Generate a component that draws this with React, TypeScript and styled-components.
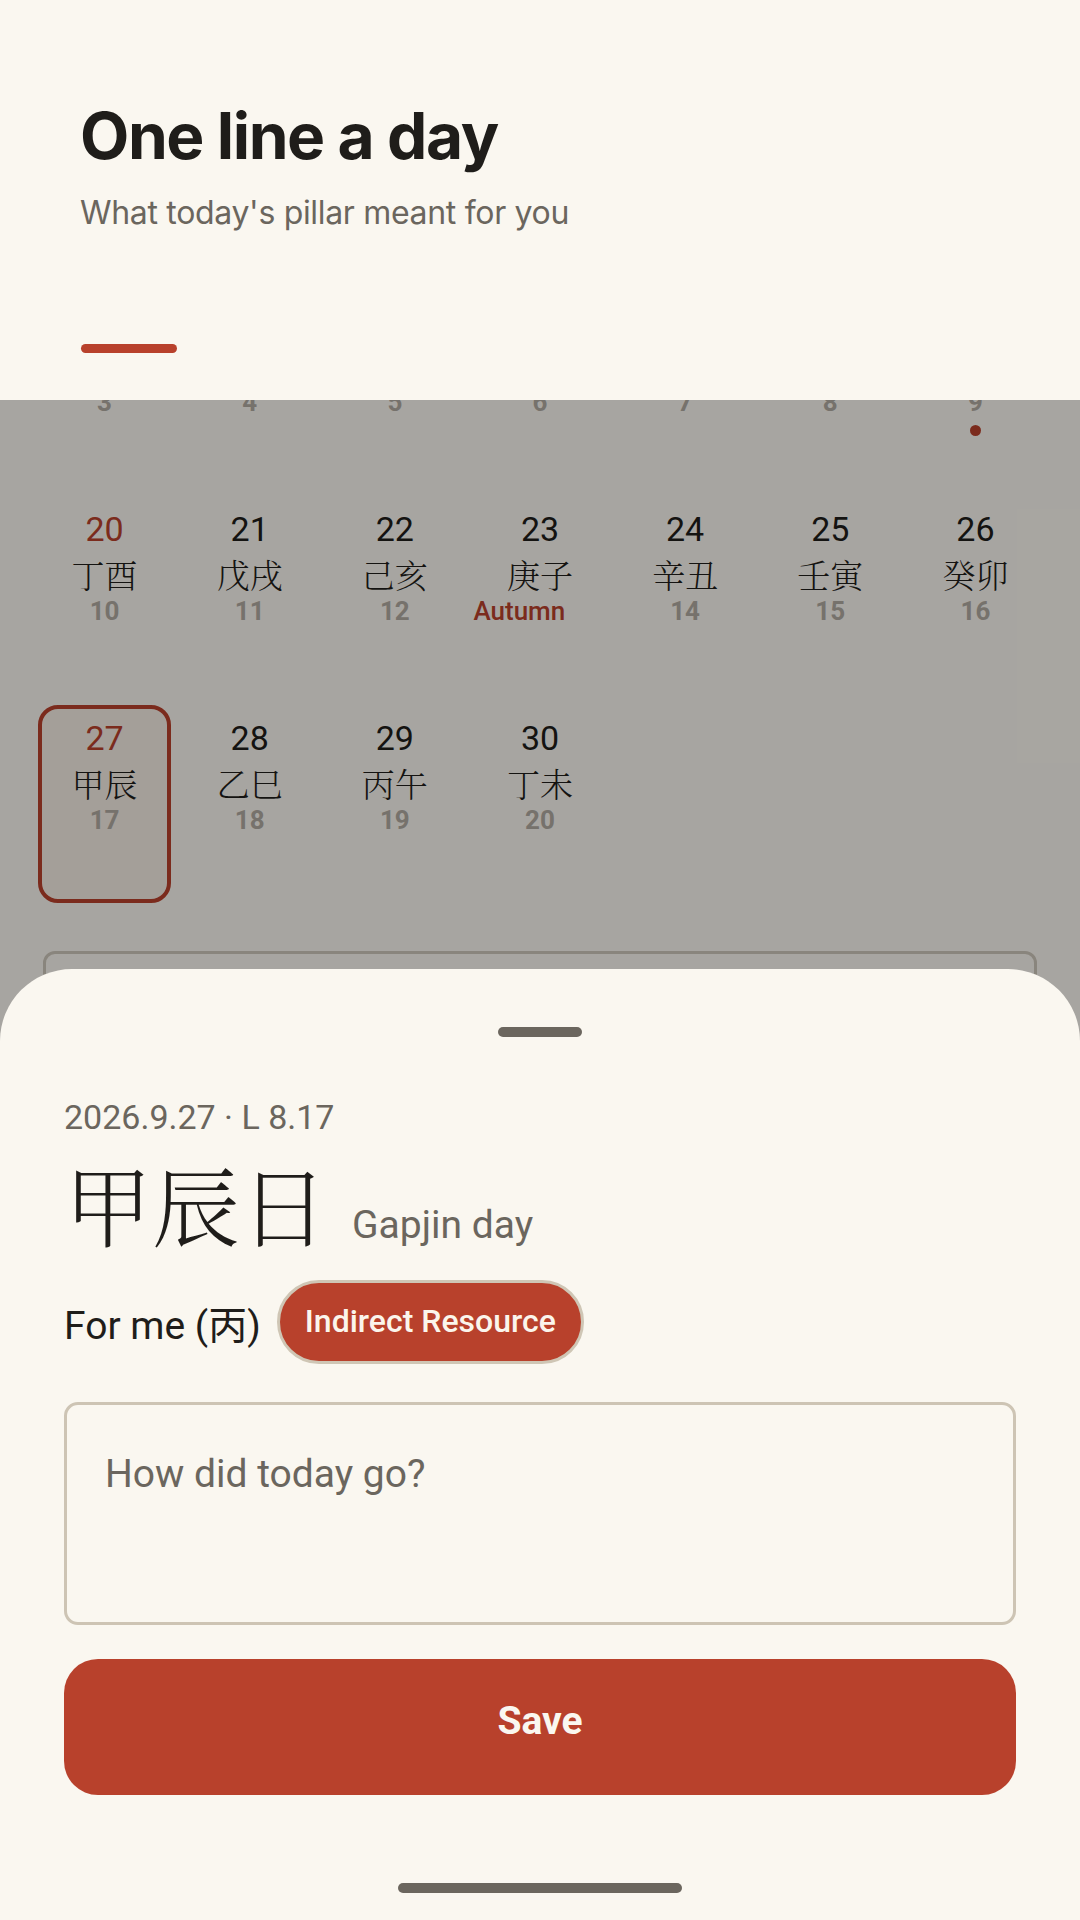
import { FC } from 'react';
import styled, { createGlobalStyle } from 'styled-components';

// ----------------------------------------------------------------------------

const cream = '#faf7f0';
const ink = '#1f1d1a';
const muted = '#6b665e';
const accent = '#b8412c';

const GlobalStyle = createGlobalStyle`
  html, body {
    margin: 0;
    padding: 0;
    background: ${cream};
  }

  * {
    box-sizing: border-box;
  }
`;

interface DayCell {
  day: number;
  pillar: string;
  lunar: string;
  sunday?: boolean;
  selected?: boolean;
  term?: boolean;
  marked?: boolean;
}

const weeks: DayCell[][] = [
  [
    { day: 13, pillar: '庚寅', lunar: '3', sunday: true },
    { day: 14, pillar: '辛卯', lunar: '4' },
    { day: 15, pillar: '壬辰', lunar: '5' },
    { day: 16, pillar: '癸巳', lunar: '6' },
    { day: 17, pillar: '甲午', lunar: '7' },
    { day: 18, pillar: '乙未', lunar: '8' },
    { day: 19, pillar: '丙申', lunar: '9', marked: true },
  ],
  [
    { day: 20, pillar: '丁酉', lunar: '10', sunday: true },
    { day: 21, pillar: '戊戌', lunar: '11' },
    { day: 22, pillar: '己亥', lunar: '12' },
    { day: 23, pillar: '庚子', lunar: 'Autumn', term: true },
    { day: 24, pillar: '辛丑', lunar: '14' },
    { day: 25, pillar: '壬寅', lunar: '15' },
    { day: 26, pillar: '癸卯', lunar: '16' },
  ],
  [
    { day: 27, pillar: '甲辰', lunar: '17', sunday: true, selected: true },
    { day: 28, pillar: '乙巳', lunar: '18' },
    { day: 29, pillar: '丙午', lunar: '19' },
    { day: 30, pillar: '丁未', lunar: '20' },
  ],
];

// ----------------------------------------------------------------------------

const Screen = styled.div`
  position: relative;
  width: 1080px;
  height: 1920px;
  overflow: hidden;
  display: flex;
  flex-direction: column;
  background: ${cream};
  font-family: Roboto, 'Noto Sans CJK SC', sans-serif;
`;

const Header = styled.header`
  flex-shrink: 0;
  height: 400px;
  padding: 98px 80px 0;
  background: ${cream};
`;

const Title = styled.h1`
  margin: 0;
  font-family: Inter, 'Noto Sans', sans-serif;
  font-size: 64px;
  line-height: 1.2;
  font-weight: 700;
  letter-spacing: -0.022em;
  color: ${ink};
`;

const Subtitle = styled.p`
  margin: 18px 0 0;
  font-family: Inter, 'Noto Sans', sans-serif;
  font-size: 32px;
  line-height: 40px;
  letter-spacing: -0.01em;
  color: ${muted};
`;

const AccentBar = styled.div`
  margin: 111px 0 0 1px;
  width: 96px;
  height: 9px;
  border-radius: 5px;
  background: ${accent};
`;

const CalendarViewport = styled.section`
  position: relative;
  flex: 1;
  overflow: hidden;
  padding: 0 32px;
`;

const MonthGrid = styled.div`
  margin-top: -113px;
  display: grid;
  grid-template-columns: repeat(7, 1fr);
  row-gap: 11px;
`;

const Cell = styled.div<{ $selected?: boolean }>`
  height: 198px;
  margin: 0 6px;
  padding-top: 13px;
  display: flex;
  flex-direction: column;
  align-items: center;
  border-radius: 20px;
  border: 4px solid ${(p) => (p.$selected ? accent : 'transparent')};
  background: ${(p) => (p.$selected ? '#f5ede5' : 'transparent')};
`;

const DayNumber = styled.span<{ $red?: boolean }>`
  margin-top: -4px;
  font-size: 34px;
  line-height: 40px;
  color: ${(p) => (p.$red ? accent : ink)};
`;

const Pillar = styled.span`
  font-family: 'Noto Serif CJK SC', 'Noto Sans CJK SC', serif;
  font-weight: 300;
  font-size: 33px;
  line-height: 50px;
  color: ${ink};
`;

const Lunar = styled.span<{ $term?: boolean }>`
  font-size: 26px;
  line-height: 24px;
  font-weight: ${(p) => (p.$term ? 500 : 700)};
  color: ${(p) => (p.$term ? accent : '#b1aaa2')};
  white-space: nowrap;
  align-self: ${(p) => (p.$term ? 'flex-start' : 'center')};
  margin-left: ${(p) => (p.$term ? '-4px' : '0')};
`;

const Dot = styled.span`
  margin-top: 11px;
  width: 11px;
  height: 11px;
  border-radius: 50%;
  background: ${accent};
`;

const NoteCard = styled.div`
  margin: 48px 11px 0;
  height: 320px;
  border: 3px solid #cdc6bb;
  border-radius: 12px;
`;

const Scrim = styled.div`
  position: absolute;
  inset: 0;
  background: rgba(0, 0, 0, 0.328);
`;

const Sheet = styled.div`
  position: absolute;
  left: 0;
  right: 0;
  bottom: 0;
  height: 951px;
  padding: 0 64px;
  display: flex;
  flex-direction: column;
  background: ${cream};
  border-radius: 72px 72px 0 0;
`;

const Handle = styled.div`
  align-self: center;
  margin-top: 58px;
  width: 84px;
  height: 10px;
  border-radius: 5px;
  background: ${muted};
`;

const DateLine = styled.div`
  margin-top: 60px;
  font-size: 34px;
  line-height: 40px;
  color: ${muted};
`;

const PillarRow = styled.div`
  margin-top: 12px;
  display: flex;
  align-items: baseline;
  gap: 24px;
`;

const PillarTitle = styled.span`
  font-family: 'Noto Serif CJK SC', 'Noto Sans CJK SC', serif;
  font-weight: 300;
  font-size: 88px;
  line-height: 106px;
  color: ${ink};
`;

const Romanized = styled.span`
  font-size: 39px;
  color: ${muted};
  position: relative;
  top: -2px;
`;

const RelationRow = styled.div`
  margin-top: 25px;
  display: flex;
  align-items: center;
  gap: 16px;
`;

const RelationLabel = styled.span`
  font-size: 39px;
  color: ${ink};
`;

const Chip = styled.span`
  height: 84px;
  padding: 0 25px 3px;
  display: inline-flex;
  align-items: center;
  border-radius: 42px;
  border: 3px solid #cfc6b5;
  background: ${accent};
  color: #fbf5ec;
  font-size: 32px;
  font-weight: 500;
`;

const NoteInput = styled.textarea`
  margin-top: 38px;
  width: 100%;
  height: 223px;
  padding: 40px 38px;
  resize: none;
  border: 3px solid #cdc4b4;
  border-radius: 14px;
  background: ${cream};
  font-family: Roboto, sans-serif;
  font-size: 39px;
  line-height: 1.5;
  color: ${ink};
  outline: none;

  &::placeholder {
    color: ${muted};
  }
`;

const SaveButton = styled.button`
  margin-top: 34px;
  width: 100%;
  height: 136px;
  padding: 0 0 12px;
  border: none;
  border-radius: 34px;
  background: ${accent};
  color: ${cream};
  font-family: Roboto, sans-serif;
  font-size: 39px;
  font-weight: 700;
`;

const HomeBar = styled.div`
  align-self: center;
  margin-top: 88px;
  width: 284px;
  height: 10px;
  border-radius: 5px;
  background: ${muted};
`;

// ----------------------------------------------------------------------------

const App: FC = () => {
  return (
    <>
      <GlobalStyle />
      <Screen>
        <Header>
          <Title>One line a day</Title>
          <Subtitle>What today's pillar meant for you</Subtitle>
          <AccentBar />
        </Header>

        <CalendarViewport>
          <MonthGrid>
            {weeks.flat().map((c) => (
              <Cell key={c.day} $selected={c.selected}>
                <DayNumber $red={c.sunday}>{c.day}</DayNumber>
                <Pillar>{c.pillar}</Pillar>
                <Lunar $term={c.term}>{c.lunar}</Lunar>
                {c.marked && <Dot />}
              </Cell>
            ))}
          </MonthGrid>
          <NoteCard />
          <Scrim />
        </CalendarViewport>

        <Sheet>
          <Handle />
          <DateLine>2026.9.27 · L 8.17</DateLine>
          <PillarRow>
            <PillarTitle>甲辰日</PillarTitle>
            <Romanized>Gapjin day</Romanized>
          </PillarRow>
          <RelationRow>
            <RelationLabel>For me (丙)</RelationLabel>
            <Chip>Indirect Resource</Chip>
          </RelationRow>
          <NoteInput placeholder="How did today go?" />
          <SaveButton>Save</SaveButton>
          <HomeBar />
        </Sheet>
      </Screen>
    </>
  );
};

export default App;
